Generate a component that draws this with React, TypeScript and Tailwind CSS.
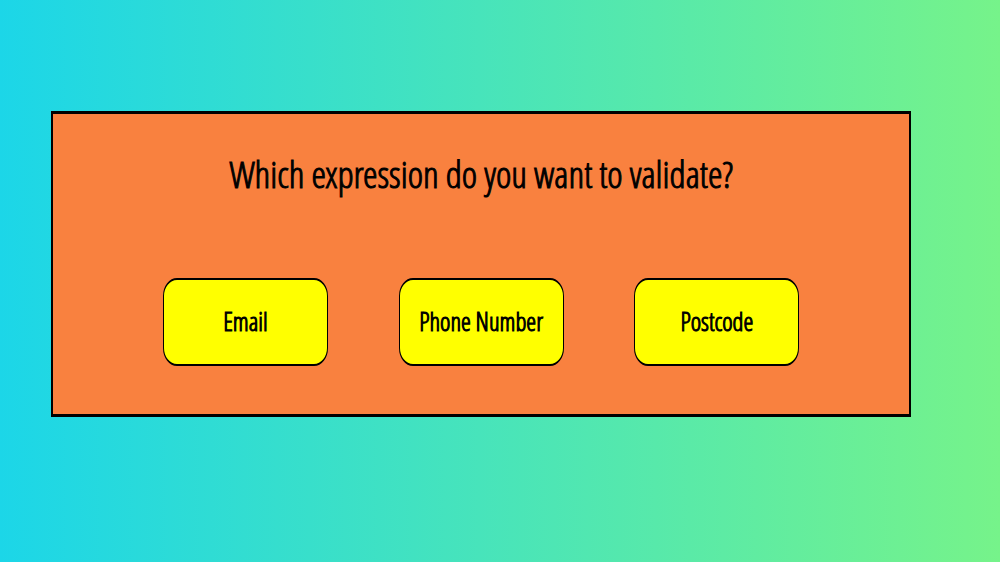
export default function App() {
  const options = ["Email", "Phone Number", "Postcode"];
  return (
    <main className="min-h-screen bg-linear-to-r/srgb from-[#1cd6e8] to-[#76f38a] px-[5.1%] pt-[111px] font-['Open_Sans_Condensed_Light','Roboto_Condensed',sans-serif] text-black [-webkit-text-stroke:1px_black]">
      <section className="w-[95.8%] border-x-2 border-y-3 border-black bg-[#f9813f] px-[8.3%] pt-9 pb-12">
        <h1 className="text-center text-[37px] leading-12 font-normal">
          Which expression do you want to validate?
        </h1>
        <div className="mt-20 flex justify-around">
          {options.map((option) => (
            <button key={option} type="button" className="h-22 w-[165px] rounded-[14px/18px] border-x border-y-2 border-black bg-[#ffff00] text-[25px] font-normal">
              {option}
            </button>
          ))}
        </div>
      </section>
    </main>
  );
}
